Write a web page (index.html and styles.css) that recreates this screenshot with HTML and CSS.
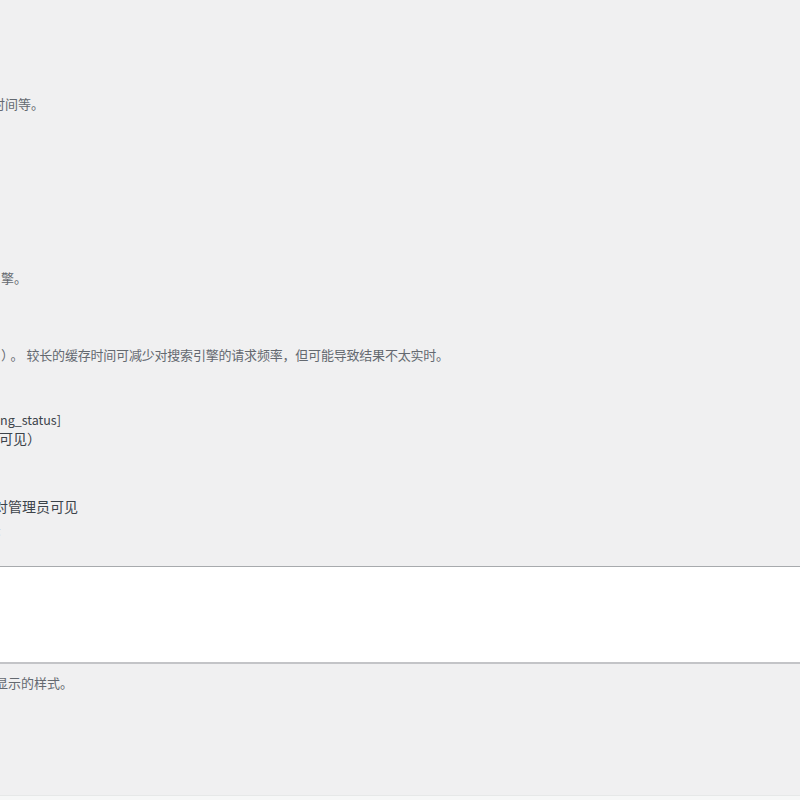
FILE: index.html
```html
<!DOCTYPE html>
<html lang="zh-CN">
<head>
<meta charset="utf-8">
<title>设置</title>
<link rel="stylesheet" href="styles.css">
</head>
<body>
<div class="page">
  <section class="group g1">
    <p class="desc shift-time">时间等。</p>
  </section>
  <section class="group g2">
    <p class="desc shift-engine">擎。</p>
  </section>
  <section class="group g3">
    <p class="desc shift-paren"><span class="paren">）。</span>较长的缓存时间可减少对搜索引擎的请求频率，但可能导致结果不太实时。</p>
  </section>
  <section class="group g4">
    <p class="label code-tail">ng_status]</p>
    <p class="label shift-visible">可见）</p>
  </section>
  <section class="group g5">
    <p class="label shift-admin">对管理员可见</p>
    <p class="tiny shift-tiny">示</p>
  </section>
  <div class="editor"></div>
  <section class="group g6">
    <p class="desc shift-style">显示的样式。</p>
  </section>
  <div class="footer"></div>
</div>
</body>
</html>
```
FILE: styles.css
```css
html, body {
  margin: 0;
  padding: 0;
}
body {
  background: #f0f0f1;
  font-family: "Noto Sans CJK SC", "Noto Sans", sans-serif;
  color: #3c434a;
  height: 800px;
  overflow: hidden;
}
.page {
  display: flex;
  flex-direction: column;
  width: 800px;
  overflow: hidden;
}
.group p {
  margin: 0;
  white-space: nowrap;
}
.desc {
  font-size: 13px;
  line-height: 20px;
  color: #646970;
}
.paren {
  letter-spacing: 3px;
}
.label {
  font-size: 14px;
  line-height: 18px;
  color: #3c434a;
}
.code-tail {
  font-size: 12.5px;
}
.tiny {
  font-size: 13px;
  line-height: 16px;
  color: #c3c4c7;
  margin-top: 7px !important;
}
.g1 { margin-top: 94px; }
.g2 { margin-top: 154px; }
.g3 { margin-top: 57px; }
.g4 { margin-top: 46px; }
.g5 { margin-top: 50px; }
.g6 { margin-top: 9px; }

.shift-time { margin-left: -8px !important; }
.shift-engine { margin-left: 1px !important; }
.shift-paren { margin-left: 1px !important; letter-spacing: -0.2px; }
.shift-visible { margin-left: -1px !important; }
.shift-admin { margin-left: -6px !important; }
.shift-tiny { margin-left: -12px !important; }
.shift-style { margin-left: -5px !important; }

.editor {
  margin-top: 28px;
  height: 95px;
  background: #ffffff;
  border-top: 1px solid #a7aaad;
  border-bottom: 2px solid #c3c4c7;
}
.footer {
  margin-top: 102px;
  height: 10px;
  background: #f6f7f7;
  border-top: 1px solid #e6e8e8;
}
```
